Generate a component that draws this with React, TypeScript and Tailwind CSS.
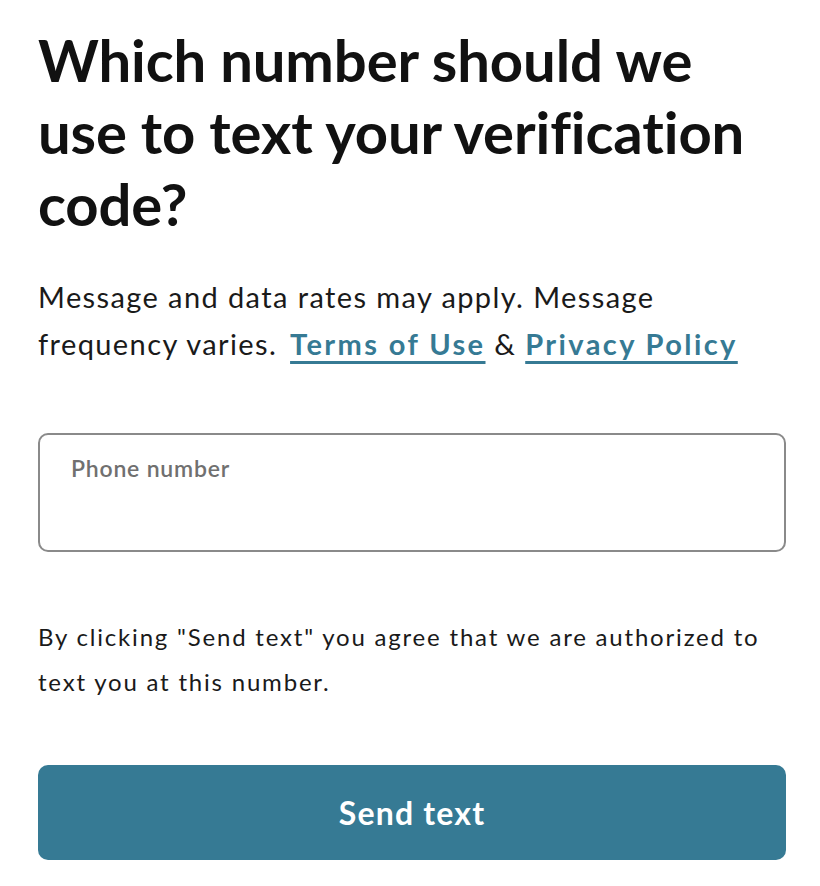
export default function App() {
  return (
    <div className="min-h-[886px] w-[820px] bg-white pl-[38px] pr-[34px] pt-[24px] font-['Lato',sans-serif] text-[#111]">
      <h1 className="text-[58px] font-bold leading-[72px] tracking-[-0.1px]">
        Which number should we use to text your verification code?
      </h1>
      <p className="mt-[33px] text-[29px] leading-[47px] tracking-[1.4px] text-[#1a1a1a]">
        Message and data rates may apply. Message frequency varies.{" "}
        <a href="#" className="ml-[4px] font-bold tracking-[2.4px] text-[#367a94] underline decoration-[3px] underline-offset-[6px]">
          Terms of Use
        </a>{" "}
        &amp;{" "}
        <a href="#" className="font-bold tracking-[2.4px] text-[#367a94] underline decoration-[3px] underline-offset-[6px]">
          Privacy Policy
        </a>
      </p>
      <label className="mt-[66px] block h-[119px] rounded-[10px] border-2 border-[#8a8a8a] px-[31px] pt-[16px]">
        <span className="block text-[23px] font-semibold tracking-[0.8px] text-[#707070]">Phone number</span>
        <input className="w-full bg-transparent text-[24px] outline-none" type="tel" />
      </label>
      <p className="mt-[62px] text-[24px] leading-[45px] tracking-[1.8px] text-[#1a1a1a]">
        By clicking "Send text" you agree that we are authorized to text you at this number.
      </p>
      <button className="mt-[61px] flex h-[95px] w-full items-center justify-center rounded-[10px] bg-[#367a94] text-[32px] font-bold tracking-[1.2px] text-white">
        Send text
      </button>
    </div>
  );
}
